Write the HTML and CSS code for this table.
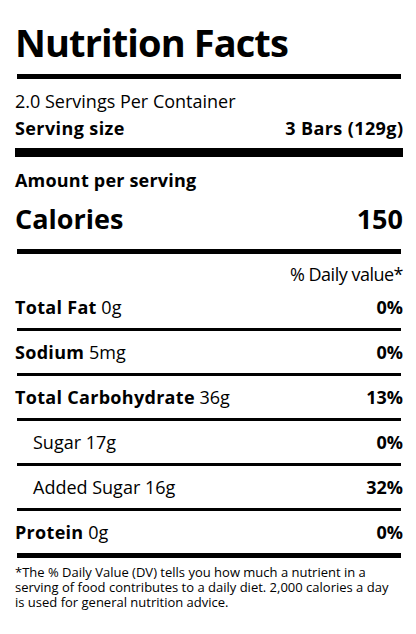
FILE: index.html
```html
<!DOCTYPE html>
<html lang="en">
<head>
<meta charset="utf-8">
<title>Nutrition Facts</title>
<link rel="stylesheet" href="styles.css">
</head>
<body>
<div class="label">
  <h1 class="title">Nutrition Facts</h1>
  <div class="bar bar-thin"></div>
  <div class="line servings">2.0 Servings Per Container</div>
  <div class="line split bold size"><span>Serving size</span><span>3 Bars (129g)</span></div>
  <div class="bar bar-thick"></div>
  <div class="line bold amount">Amount per serving</div>
  <div class="calories"><span>Calories</span><span>150</span></div>
  <div class="bar bar-mid"></div>
  <div class="daily">% Daily value*</div>
  <div class="row"><span><b>Total Fat</b> 0g</span><b>0%</b></div>
  <div class="row"><span><b>Sodium</b> 5mg</span><b>0%</b></div>
  <div class="row"><span><b>Total Carbohydrate</b> 36g</span><b>13%</b></div>
  <div class="row sub"><span>Sugar 17g</span><b>0%</b></div>
  <div class="row sub"><span>Added Sugar 16g</span><b>32%</b></div>
  <div class="row last"><span><b>Protein</b> 0g</span><b>0%</b></div>
  <p class="note">*The % Daily Value (DV) tells you how much a nutrient in a serving of food contributes to a daily diet. 2,000 calories a day is used for general nutrition advice.</p>
</div>
</body>
</html>
```
FILE: styles.css
```css
html, body {
  margin: 0;
  padding: 0;
  background: #fff;
}
body {
  font-family: "Open Sans", "Noto Sans", sans-serif;
  color: #000;
}
.label {
  padding: 19px 13px 0 15px;
}
.title {
  margin: 0 0 9px;
  font-size: 38px;
  line-height: 46px;
  font-weight: 700;
  letter-spacing: -0.9px;
}
.bar {
  background: #000;
}
.bar-thin {
  height: 5px;
  margin: 0 2px;
}
.bar-thick {
  height: 9px;
  margin: 6px 0 0;
}
.bar-mid {
  height: 5px;
  margin: 10px 2px 0;
}
.line {
  font-size: 18px;
  line-height: 27px;
}
.servings {
  margin-top: 9px;
}
.split {
  display: flex;
  justify-content: space-between;
}
.bold {
  font-weight: 700;
}
.size {
  letter-spacing: 0.4px;
}
.size > span:last-child {
  margin-right: -0.4px;
}
.amount {
  margin-top: 10px;
  letter-spacing: 0.2px;
}
.calories {
  display: flex;
  justify-content: space-between;
  margin-top: 5px;
  font-size: 27px;
  line-height: 40px;
  font-weight: 700;
}
.daily {
  margin-top: 9px;
  font-size: 18px;
  line-height: 23px;
  text-align: right;
  letter-spacing: -0.5px;
}
.row {
  display: flex;
  justify-content: space-between;
  align-items: center;
  height: 42px;
  border-bottom: 3px solid #000;
  margin: 0 2px;
  font-size: 18px;
}
.row b {
  letter-spacing: 0.3px;
}
.row > b:last-child {
  margin-right: -2px;
  letter-spacing: 0;
}
.row > span {
  margin-left: -2px;
}
.row.sub > span {
  margin-left: 16px;
}
.row.last {
  border-bottom-width: 5px;
}
.note {
  margin: 7px 10px 0 0;
  font-size: 13px;
  line-height: 15px;
}
```
